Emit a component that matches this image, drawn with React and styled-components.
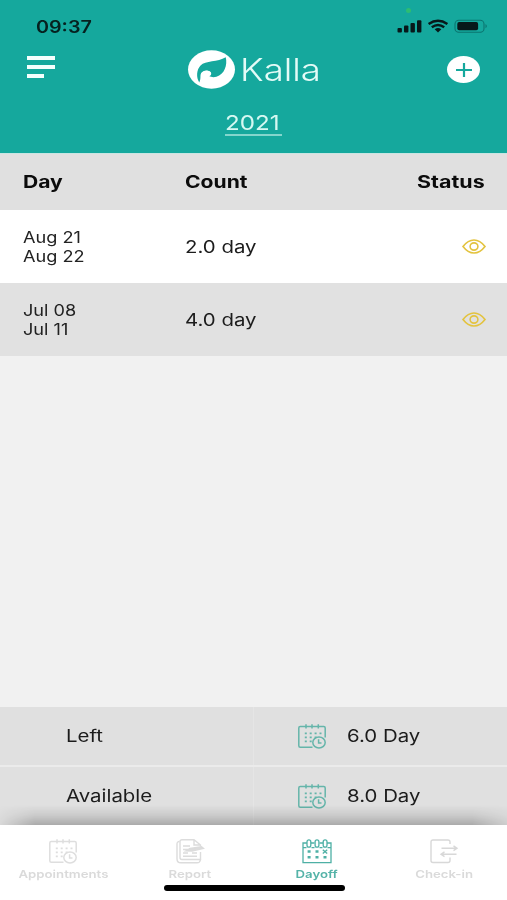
import React from "react";
import styled, { createGlobalStyle } from "styled-components";

const days = [
    { from: "Aug 21", to: "Aug 22", count: "2.0 day" },
    { from: "Jul 08", to: "Jul 11", count: "4.0 day" }
];

const totals = [
    { label: "Left", value: "6.0 Day" },
    { label: "Available", value: "8.0 Day" }
];

function Logo() {
    return (
        <LogoMark viewBox="53 60 142 118" preserveAspectRatio="none">
            <ellipse cx="124" cy="119" rx="71" ry="58" fill="#fff" />
            <path
                d="M87 158C77 143 79 119 91 107C106 91 143 97 167 82C173 106 163 134 139 141C130 144 122 142 117 139C125 136 125 127 118 124C108 119 96 123 92 132C89 139 93 146 87 158Z"
                fill="#15a89d"
            />
            <path d="M92 132C97 121 114 120 121 127C125 134 119 139 110 138C104 138 98 134 92 132Z" fill="#fff" />
        </LogoMark>
    );
}

function StatusIcons() {
    return (
        <svg width="92" height="16" viewBox="0 0 92 16">
            <g fill="#07181a">
                <rect x="-0.5" y="9" width="4.4" height="4.4" rx="1" />
                <rect x="6" y="6.5" width="4.4" height="6.9" rx="1" />
                <rect x="12.5" y="4" width="4.4" height="9.4" rx="1" />
                <rect x="19" y="1.2" width="4.4" height="12.2" rx="1" />
                <path d="M40 13.4L36.7 10.2Q40 8 43.3 10.2Z" />
            </g>
            <g fill="none" stroke="#07181a" strokeWidth="2.4">
                <path d="M30.6 5Q40 -1.5 49.4 5" />
                <path d="M33.8 8.3Q40 3.6 46.2 8.3" />
            </g>
            <rect x="57" y="1.2" width="29" height="12" rx="3.8" fill="none" stroke="#0b746f" strokeWidth="1.1" />
            <rect x="59.3" y="3.1" width="20.8" height="8.2" rx="1.8" fill="#07181a" />
            <path d="M87.5 5Q90.2 7.2 87.5 9.3Z" fill="#0b746f" />
        </svg>
    );
}

function Eye() {
    return (
        <svg width="24" height="15" viewBox="0 0 24 15" fill="none" stroke="#e3c33f" strokeWidth="1.6">
            <path d="M1 7.5Q6 1 12 1T23 7.5Q18 14 12 14T1 7.5Z" />
            <ellipse cx="12" cy="7.5" rx="3.9" ry="3.6" />
        </svg>
    );
}

function CalendarClock({ color }) {
    return (
        <svg width="28" height="25" viewBox="0 0 28 25" fill="none" stroke={color} strokeWidth="1.5">
            <path d="M14.5 23.3H2.2Q0.8 23.3 0.8 21.8V4Q0.8 2.5 2.2 2.5H25.8Q27.2 2.5 27.2 4V13.5" />
            <path d="M8 0.3V4.6M14 0.3V4.6M20.3 0.3V4.6" />
            <path d="M6.8 9.3H24M6.8 13.3H20M6.8 17.3H14" strokeWidth="1.8" strokeDasharray="2 2.9" />
            <ellipse cx="21" cy="18.5" rx="6.2" ry="5.5" />
            <path d="M20.6 15.3V18.9H23.5" />
        </svg>
    );
}

function ReportIcon() {
    return (
        <svg width="28" height="25" viewBox="0 0 28 25" fill="none" stroke="#dcdcdc" strokeWidth="1.4">
            <path d="M3.5 2.5Q1 2.5 1 5V20Q1 23.8 5 23.8H21Q24 23.8 24.5 20.5" />
            <path d="M24.5 13V20.5H6Q4 20.5 4 18.5V2.5Q4 0.8 6 0.8H18L24.5 6V7.5M18 0.8V6H24.5" />
            <path d="M7 7H14M7 10.5H12M7 14H12M16 14H21M7 17.3H21" />
            <path d="M10 11.8L14 9.5L25.5 7.8L27.4 9.3L16 12Z" fill="#dcdcdc" />
        </svg>
    );
}

function DayoffIcon() {
    return (
        <svg width="30" height="25" viewBox="0 0 30 25" fill="none" stroke="#4eb0a5" strokeWidth="1.3">
            <path d="M5 4H1V23.7H29V4H25M9 4H12.5M17.5 4H21" />
            <path d="M1 8.6H4.5M9.5 8.6H12.5M17.5 8.6H20.5M25.5 8.6H29" />
            <rect x="5" y="0.8" width="3.8" height="7.3" rx="1.9" />
            <rect x="13.1" y="0.8" width="3.8" height="7.3" rx="1.9" />
            <rect x="21.2" y="0.8" width="3.8" height="7.3" rx="1.9" />
            <path d="M5.6 12.5H8.6M13.5 12.5H16.5M5.6 18.2H8.6M13.5 18.2H16.5M21.5 18.2H24.5" strokeWidth="2.6" />
            <path d="M20.8 10.7L25.2 14.5M25.2 10.7L20.8 14.5" />
        </svg>
    );
}

function CheckinIcon() {
    return (
        <svg width="28" height="25" viewBox="0 0 28 25" fill="none" stroke="#d8d8d8" strokeWidth="1.4">
            <path d="M20 5V3Q20 1 18 1H3Q1 1 1 3V21.5Q1 23.5 3 23.5H18Q20 23.5 20 21.5V18.5" />
            <path d="M11.5 9.2H27M23.5 6.8L27 9.2L23.5 11.6M26.5 15.2H11M14.5 12.8L11 15.2L14.5 17.6" />
        </svg>
    );
}

function App() {
    return (
        <Screen>
            <GlobalStyle />
            <Header>
                <StatusBar>
                    <Time $scale={1.16}>09:37</Time>
                    <StatusIcons />
                    <CameraDot />
                </StatusBar>
                <NavBar>
                    <Menu>
                        <Bar />
                        <Bar />
                        <Bar $short />
                    </Menu>
                    <Brand>
                        <Logo />
                        <BrandName $scale={1.18}>Kalla</BrandName>
                    </Brand>
                    <AddButton>
                        <svg width="18" height="14" viewBox="0 0 18 14" stroke="#15a89d" strokeWidth="2.2">
                            <path d="M1 7H17M9 0V14" />
                        </svg>
                    </AddButton>
                </NavBar>
                <Year>
                    <YearText $scale={1.18}>2021</YearText>
                </Year>
            </Header>

            <TableHead>
                <Heading $scale={1.24}>Day</Heading>
                <Heading $scale={1.24}>Count</Heading>
                <Heading $scale={1.26} $origin="right">Status</Heading>
            </TableHead>
            {days.map((day, i) => (
                <Row key={day.from} $shaded={i % 2 === 1}>
                    <Dates>
                        <DateText $scale={1.17}>{day.from}</DateText>
                        <DateText $scale={1.17}>{day.to}</DateText>
                    </Dates>
                    <Value>{day.count}</Value>
                    <Eye />
                </Row>
            ))}

            <Empty />

            <Totals>
                {totals.map(total => (
                    <TotalRow key={total.label}>
                        <TotalLabel>
                            <Value>{total.label}</Value>
                        </TotalLabel>
                        <TotalValue>
                            <CalendarClock color="#65b5aa" />
                            <Value>{total.value}</Value>
                        </TotalValue>
                    </TotalRow>
                ))}
            </Totals>

            <TabBar>
                <Tab>
                    <CalendarClock color="#dedede" />
                    <TabLabel>Appointments</TabLabel>
                </Tab>
                <Tab>
                    <ReportIcon />
                    <TabLabel>Report</TabLabel>
                </Tab>
                <Tab $active>
                    <DayoffIcon />
                    <TabLabel>Dayoff</TabLabel>
                </Tab>
                <Tab>
                    <CheckinIcon />
                    <TabLabel>Check-in</TabLabel>
                </Tab>
                <HomeIndicator />
            </TabBar>
        </Screen>
    );
}

export default App;

const GlobalStyle = createGlobalStyle`
    * {
        box-sizing: border-box;
    }

    body {
        margin: 0;
        font-family: Inter, "Liberation Sans", sans-serif;
    }

    svg {
        display: block;
        flex-shrink: 0;
        overflow: visible;
    }
`;

const Screen = styled.div`
    width: 507px;
    height: 900px;
    display: flex;
    flex-direction: column;
    overflow: hidden;
    background-color: #f1f1f1;
`;

const Text = styled.span`
    display: block;
    width: max-content;
    white-space: nowrap;
    transform: scaleX(${props => props.$scale || 1.2});
    transform-origin: ${props => props.$origin || "left"} center;
`;

const Header = styled.div`
    height: 153px;
    background-color: #15a89d;
`;

const StatusBar = styled.div`
    position: relative;
    height: 50px;
    padding: 19px 17px 0 36px;
    display: flex;
    justify-content: space-between;
`;

const Time = styled(Text)`
    font-size: 17px;
    line-height: 16px;
    font-weight: 600;
    color: #06211f;
`;

const CameraDot = styled.div`
    position: absolute;
    left: 406px;
    top: 8px;
    width: 5px;
    height: 5px;
    border-radius: 50%;
    background-color: #2dbd72;
`;

const NavBar = styled.div`
    height: 40px;
    padding: 0 27px;
    display: grid;
    grid-template-columns: 161px 1fr 33px;
`;

const Menu = styled.div`
    padding-top: 6px;
    display: flex;
    flex-direction: column;
    gap: 5px;
`;

const Bar = styled.div`
    width: ${props => (props.$short ? "17px" : "28px")};
    height: 4px;
    background-color: #f4fffd;
`;

const Brand = styled.div`
    display: flex;
    gap: 5px;
`;

const LogoMark = styled.svg`
    width: 47px;
    height: 39px;
`;

const BrandName = styled(Text)`
    font-size: 31px;
    line-height: 40px;
    font-weight: 300;
    color: #e3fbf7;
`;

const AddButton = styled.div`
    width: 33px;
    height: 27px;
    margin-top: 6px;
    border-radius: 50%;
    display: flex;
    align-items: center;
    justify-content: center;
    background-color: #fff;
`;

const Year = styled.div`
    width: 57px;
    height: 46px;
    margin: 0 auto;
    padding-top: 21px;
    border-bottom: 2px solid #83d6cd;
`;

const YearText = styled(Text)`
    font-size: 20.5px;
    line-height: 24px;
    color: #d5f8f2;
`;

const TableHead = styled.div`
    height: 57px;
    padding: 0 22px 0 23px;
    display: grid;
    grid-template-columns: 162px 1fr auto;
    align-items: center;
    border-top: 1px solid #c9e5e2;
    background-color: #e0e0e0;
`;

const Heading = styled(Text)`
    font-size: 17px;
    font-weight: 700;
    color: #0c0c0c;
`;

const Row = styled.div`
    height: 73px;
    padding: 0 21px 0 23px;
    display: grid;
    grid-template-columns: 162px 1fr auto;
    align-items: center;
    background-color: ${props => (props.$shaded ? "#e1e1e1" : "#fff")};
`;

const Dates = styled.div`
    padding-top: 1px;
`;

const DateText = styled(Text)`
    font-size: 15.5px;
    line-height: 19px;
    color: #222;
`;

const Value = styled(Text)`
    font-size: 17px;
    line-height: 22px;
    color: #1c1c1c;
`;

const Empty = styled.div`
    flex: 1;
`;

const Totals = styled.div`
    position: relative;
    height: 118px;
    display: flex;
    flex-direction: column;
    gap: 2px;
    background-color: #ebebeb;

    &::after {
        content: "";
        position: absolute;
        left: 0;
        right: 0;
        bottom: 0;
        height: 20px;
        background: linear-gradient(to bottom, rgba(0, 0, 0, 0), rgba(0, 0, 0, 0.09) 50%, rgba(0, 0, 0, 0.24));
        mask-image: linear-gradient(to right, rgba(0, 0, 0, 0.15), #000 35px, #000 472px, rgba(0, 0, 0, 0.35));
    }
`;

const TotalRow = styled.div`
    flex: 1;
    display: grid;
    grid-template-columns: 253px 1fr;
    gap: 1px;
    background-color: #e5e5e5;
`;

const TotalLabel = styled.div`
    padding-left: 66px;
    display: flex;
    align-items: center;
    background-color: #e0e0e0;
`;

const TotalValue = styled.div`
    padding-left: 44px;
    display: flex;
    align-items: center;
    gap: 21px;
    background-color: #e0e0e0;
`;

const TabBar = styled.div`
    position: relative;
    height: 75px;
    display: grid;
    grid-template-columns: repeat(4, 1fr);
    background-color: #fff;
`;

const Tab = styled.div`
    padding-top: 14px;
    display: flex;
    flex-direction: column;
    align-items: center;
    gap: 3px;
    color: ${props => (props.$active ? "#55b3a8" : "#dadada")};
`;

const TabLabel = styled(Text).attrs({ $origin: "center" })`
    font-size: 11px;
    line-height: 14px;
    font-weight: 600;
`;

const HomeIndicator = styled.div`
    position: absolute;
    left: 164px;
    top: 60px;
    width: 181px;
    height: 6px;
    border-radius: 3px;
    background-color: #000;
`;
